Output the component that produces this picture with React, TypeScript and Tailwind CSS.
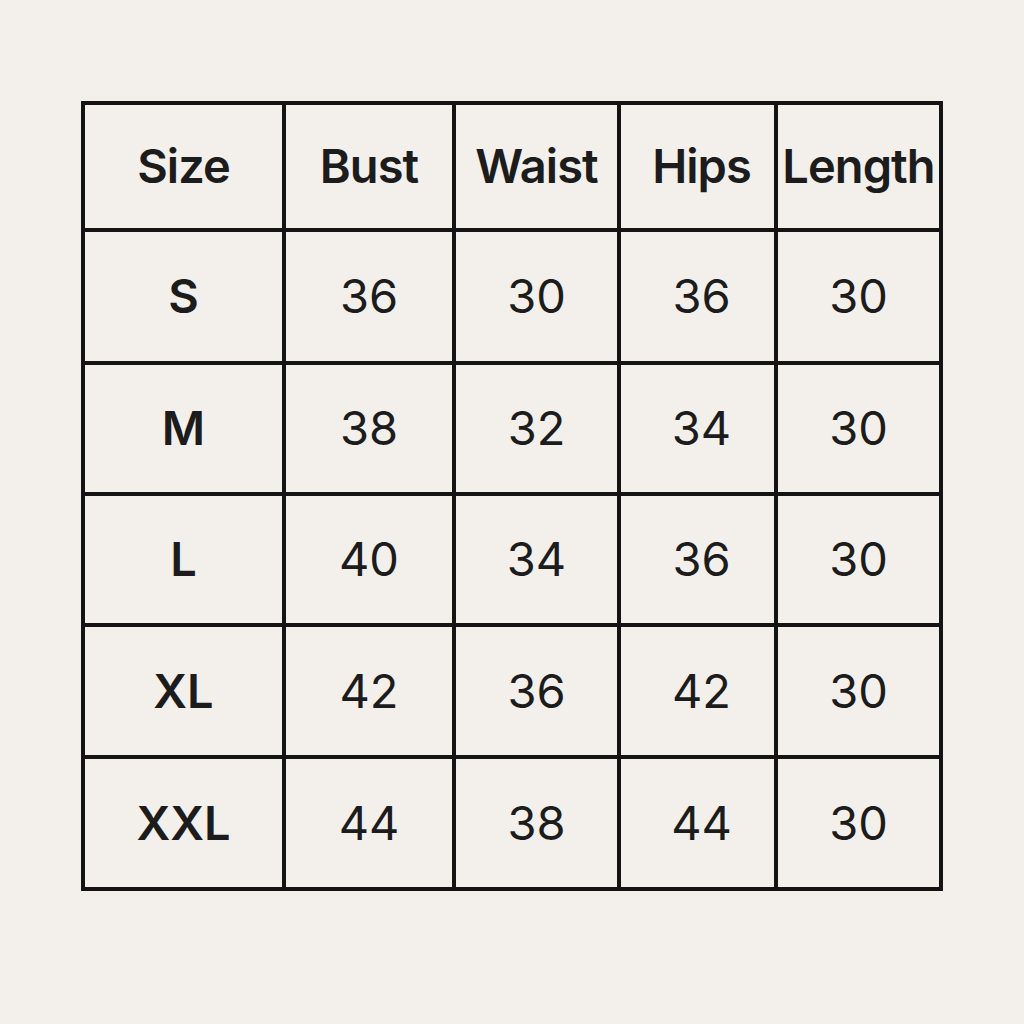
import React from 'react';

const headers = ['Size', 'Bust', 'Waist', 'Hips', 'Length'];

const rows: [string, string, string, string, string][] = [
    ['S', '36', '30', '36', '30'],
    ['M', '38', '32', '34', '30'],
    ['L', '40', '34', '36', '30'],
    ['XL', '42', '36', '42', '30'],
    ['XXL', '44', '38', '44', '30'],
];

// the Hips column sits a touch right of centre in the picture
const shift = (i: number) => (i === 3 ? ' pl-[8px]' : '');

export default function App() {
    return (
        <main
            className="min-h-screen w-full bg-[#f3f0ec] pt-[101px] pl-[81px]"
            style={{ fontFamily: 'Inter, "Noto Sans", sans-serif' }}
        >
            <div className="grid w-max grid-cols-[197px_166px_161px_153px_161px] grid-rows-[123px_129px_127px_127px_128px_128px] gap-[4px] bg-[#141414] p-[4px] text-[#1c1c1c]">
                {headers.map((h, i) => (
                    <div
                        key={h}
                        className={'flex items-center justify-center bg-[#f3f0ec] text-[47px] font-semibold tracking-[-0.02em]' + shift(i)}
                    >
                        {h}
                    </div>
                ))}
                {rows.map((row) =>
                    row.map((cell, i) => (
                        <div
                            key={row[0] + i}
                            className={
                                (i === 0
                                    ? 'flex items-center justify-center bg-[#f3f0ec] text-[47px] font-semibold'
                                    : 'flex items-center justify-center bg-[#f3f0ec] text-[47px] font-normal') + shift(i)
                            }
                        >
                            {cell}
                        </div>
                    ))
                )}
            </div>
        </main>
    );
}
